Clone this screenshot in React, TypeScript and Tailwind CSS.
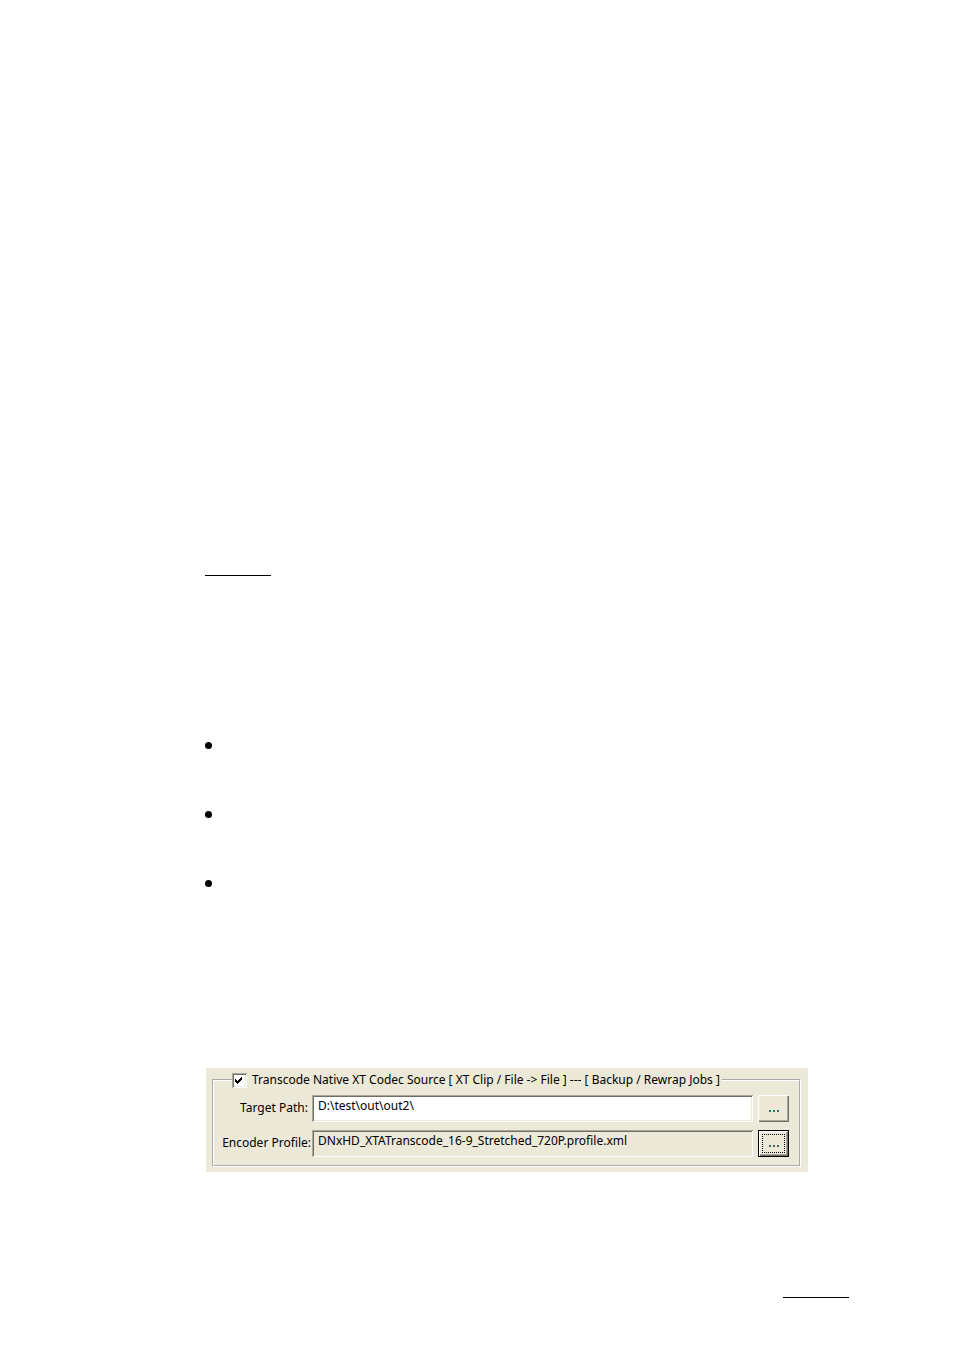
import { useState } from 'react';
import type { ReactNode } from 'react';

type BrowseButtonProps = {
    label: string;
    active?: boolean;
};

function BrowseButton({ label, active }: BrowseButtonProps) {
    return (
        <button
            type="button"
            aria-label={label}
            className={
                active
                    ? 'flex h-[27px] w-[31px] shrink-0 items-center justify-center border border-black bg-[#ece9d8] shadow-[inset_1px_1px_0_#fff,inset_-1px_-1px_0_#716f64,inset_-2px_-2px_0_#aca899]'
                    : 'flex h-[27px] w-[31px] shrink-0 items-center justify-center bg-[#ece9d8] shadow-[inset_1px_1px_0_#fff,inset_-1px_-1px_0_#716f64,inset_-2px_-2px_0_#aca899]'
            }
        >
            <span
                className={
                    active
                        ? 'flex h-[19px] w-[23px] items-center justify-center border border-dotted border-black'
                        : 'flex h-[19px] w-[23px] items-center justify-center'
                }
            >
                <svg viewBox="0 0 10 2" className="mt-1 h-[2px] w-[10px]" shapeRendering="crispEdges">
                    <path d="M0 0h1v2H0zM4 0h1v2H4zM8 0h1v2H8z" fill="#8a5a2c" />
                    <path d="M1 0h1v2H1zM5 0h1v2H5zM9 0h1v2H9z" fill="#006d9c" />
                </svg>
            </span>
        </button>
    );
}

type FieldRowProps = {
    id: string;
    label: string;
    children: ReactNode;
};

function FieldRow({ id, label, children }: FieldRowProps) {
    return (
        <div className="flex items-center">
            <label htmlFor={id} className="w-[98px] shrink-0 pr-px pb-0.5 text-right whitespace-nowrap">
                {label}
            </label>
            {children}
        </div>
    );
}

export default function App() {
    const [enabled, setEnabled] = useState(true);
    const [path, setPath] = useState('D:\\test\\out\\out2\\');

    return (
        <main className="min-h-screen bg-white pt-[575px] pb-[52px] font-['Noto_Sans',sans-serif] text-[12px] leading-4 text-black">
            <hr className="ml-[205px] w-[66px] border-t border-black" />

            <ul className="mt-[166px] ml-[205px] flex flex-col gap-[62px]">
                <li className="size-[7px] rounded-full bg-black" />
                <li className="size-[7px] rounded-full bg-black" />
                <li className="size-[7px] rounded-full bg-black" />
            </ul>

            <section className="mt-[181px] mr-[146px] ml-[206px] bg-[#ece9d8] px-1.5 pt-1 pb-[5px]">
                <fieldset className="mr-px border-2 border-[#fff] pb-2 [border-style:groove]">
                    <legend className="ml-[18px] flex items-center pr-0.5">
                        <span className="relative flex size-[15px]">
                            <input
                                id="transcode"
                                type="checkbox"
                                checked={enabled}
                                onChange={(e) => setEnabled(e.target.checked)}
                                className="size-[15px] appearance-none bg-white shadow-[inset_1px_1px_0_#aca899,inset_-1px_-1px_0_#fff,inset_2px_2px_0_#716f64,inset_-2px_-2px_0_#ece9d8]"
                            />
                            {enabled && (
                                <svg
                                    viewBox="0 0 7 7"
                                    className="pointer-events-none absolute top-1 left-[3px] size-[7px]"
                                    shapeRendering="crispEdges"
                                >
                                    <path d="M0 2h1v1h1v1h1V3h1V2h1V1h1V0h1v3H6v1H5v1H4v1H3v1H2V6H1V5H0z" />
                                </svg>
                            )}
                        </span>
                        <label htmlFor="transcode" className="pl-[5px] whitespace-nowrap">
                            Transcode Native XT Codec Source [ XT Clip / File -&gt; File ] --- [ Backup / Rewrap Jobs ]
                        </label>
                    </legend>

                    <div className="flex flex-col gap-2 pt-[7px] pr-[10px]">
                        <FieldRow id="target" label={'Target Path:\u00a0'}>
                            <input
                                id="target"
                                type="text"
                                value={path}
                                onChange={(e) => setPath(e.target.value)}
                                className="mr-[5px] h-[27px] min-w-0 flex-1 bg-white px-1.5 pb-1.5 shadow-[inset_1px_1px_0_#aca899,inset_-1px_-1px_0_#fff,inset_2px_2px_0_#716f64,inset_-2px_-2px_0_#ece9d8]"
                            />
                            <BrowseButton label="Browse target path" />
                        </FieldRow>
                        <FieldRow id="profile" label="Encoder Profile:">
                            <input
                                id="profile"
                                type="text"
                                readOnly
                                value="DNxHD_XTATranscode_16-9_Stretched_720P.profile.xml"
                                className="mr-[5px] h-[27px] min-w-0 flex-1 bg-[#ece9d8] px-1.5 pb-1.5 shadow-[inset_1px_1px_0_#aca899,inset_-1px_-1px_0_#fff,inset_2px_2px_0_#716f64]"
                            />
                            <BrowseButton label="Browse encoder profile" active />
                        </FieldRow>
                    </div>
                </fieldset>
            </section>

            <hr className="mt-[125px] mr-[105px] ml-auto w-[66px] border-t border-black" />
        </main>
    );
}
